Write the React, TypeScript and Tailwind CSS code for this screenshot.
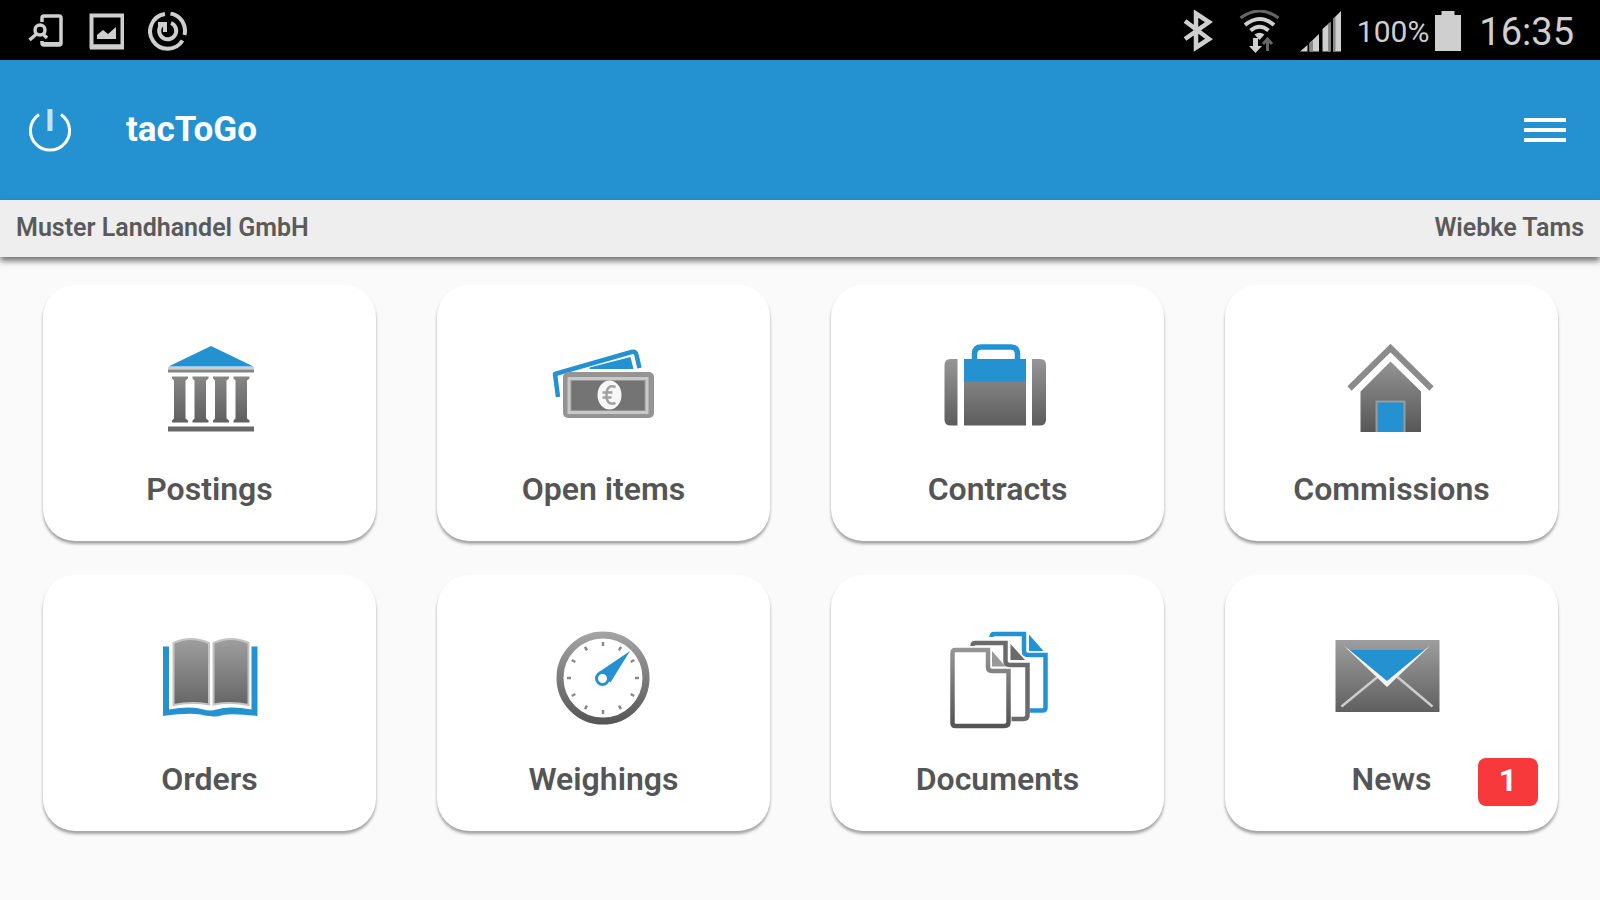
import React from 'react';

interface Tile {
  id: string;
  label: string;
  icon: React.ReactNode;
  badge?: number;
}

const BLUE = '#2492d1';
const GREY = 'url(#metal)';

// Shared gradient, in the coordinates of the 120x120 tile icons
const IconDefs = () => (
  <svg className="absolute h-0 w-0" aria-hidden="true">
    <defs>
      <linearGradient id="metal" gradientUnits="userSpaceOnUse" x1="0" y1="15" x2="0" y2="105">
        <stop offset="0" stopColor="#a3a3a3" />
        <stop offset="1" stopColor="#555555" />
      </linearGradient>
    </defs>
  </svg>
);

const TileIcon: React.FC<{ children: React.ReactNode }> = ({ children }) => (
  <svg className="h-[120px] w-[120px]" viewBox="0 0 120 120" fill="none" aria-hidden="true">
    {children}
  </svg>
);

const BankIcon = () => (
  <TileIcon>
    <path d="M61 17 103.500 37.500h-85z" fill={BLUE} />
    <path d="M18 38h86v2.500H18z" fill="#cfcfcf" />
    <path d="M18 40.500h86v3H18z" fill="#858585" />
    {[22, 42.5, 63, 83.5].map((x) => (
      <path
        key={x}
        d={`M${x} 47.500h16v2l-2.500 2v38l2.500 2v2h-16v-2l2-2V51.500l-2-2z`}
        fill={GREY}
      />
    ))}
    <path d="M18 97.500h86v5H18z" fill="#686868" />
  </TileIcon>
);

const MoneyIcon = () => (
  <TileIcon>
    <path d="M14 68 11 45 87.500 23q4-1 5 3L95.500 39" stroke={BLUE} strokeWidth="4.500" strokeLinejoin="round" />
    <path d="M45.500 38.500 86.500 28l3 12h-44z" fill={BLUE} />
    <rect x="19" y="43" width="91" height="46" rx="5" fill="#949494" />
    <rect x="25" y="49.500" width="78" height="34" stroke="#c9c9c9" strokeWidth="3" />
    <rect x="27.500" y="52" width="73" height="29" fill="#747474" />
    <ellipse cx="65.500" cy="66" rx="12" ry="14.500" fill="#f7f7f7" />
    <path d="M71.500 58q-9-3-9 8t9 8M58.500 63.500h10M58.500 68.500h9" stroke="#a0a0a0" strokeWidth="2.500" />
  </TileIcon>
);

const SuitcaseIcon = () => (
  <TileIcon>
    <path d="M36.500 31v-6q0-7 7-7h29q7 0 7 7v6" stroke={BLUE} strokeWidth="5.500" />
    <path d="M19.500 30v66.500h-7q-6 0-6-6V36q0-6 6-6z" fill={GREY} />
    <path d="M26 52h62v44.500H26z" fill={GREY} />
    <path d="M26 30h62v22.500H26z" fill={BLUE} />
    <path d="M94 30h8q6 0 6 6v54.500q0 6-6 6h-8z" fill={GREY} />
  </TileIcon>
);

const HouseIcon = () => (
  <TileIcon>
    <path d="M17.500 59.500 58.500 19l41 40.500" stroke="#8b8b8b" strokeWidth="6" />
    <path d="m58.500 32.500 30.500 30V103H28.500V62.500z" fill={GREY} />
    <path d="M43.500 71.500h30V103h-30z" fill="#9a9a9a" />
    <path d="M45.500 73.500h26V103h-26z" fill={BLUE} />
  </TileIcon>
);

const BookIcon = () => (
  <TileIcon>
    <path
      d="M13 27.500h6v63q22-4 34.500 0 6.500 2 13 0 13-4 35 0v-63h6V97q-24-3-35-1-6 2.500-12 1-4 0-10-1.500-12-2-37.500 1.500z"
      fill={BLUE}
    />
    <path d="M23.500 86V24q17-8 35.500 0v61.500q-18-3-35.500.500z" fill={GREY} stroke="#c4c4c4" strokeWidth="2" />
    <path d="M63.500 85.500V24q18-8 35 0v62q-17-3.500-35-.500z" fill={GREY} stroke="#c4c4c4" strokeWidth="2" />
  </TileIcon>
);

const GaugeIcon = () => (
  <TileIcon>
    <circle cx="59" cy="59" r="43" stroke={GREY} strokeWidth="7" />
    {Array.from({ length: 12 }, (_, i) => (
      <path
        key={i}
        d="M59 23v4"
        stroke="#888888"
        strokeWidth="2.500"
        transform={`rotate(${i * 30} 59 59)`}
      />
    ))}
    <path d="M86 32 66.500 63.500 55 53z" fill={BLUE} />
    <circle cx="58.500" cy="59.500" r="6" fill="#ffffff" stroke={BLUE} strokeWidth="3" />
  </TileIcon>
);

const DocumentsIcon = () => (
  <TileIcon>
    <path
      d="M53.500 18q0-3 3-3H86v17q0 4 4 4h17.500v52.500q0 3-3 3h-13"
      stroke={BLUE}
      strokeWidth="4.500"
    />
    <path d="M91 15.500 105.500 32H91z" fill={BLUE} />
    <path
      d="M34.500 27q0-3 3-3h30v18q0 4 4 4h18v50q0 4-4 4h-12"
      stroke="#6b6b6b"
      strokeWidth="4.500"
    />
    <path d="M72.500 25 87 41H72.500z" fill="#6b6b6b" />
    <path
      d="M17.500 31H50v17q0 4 4 4h16.500v51q0 4-4 4h-49q-3 0-3-3V34q0-3 3-3z"
      stroke={GREY}
      strokeWidth="4.500"
    />
    <path d="M54 32 67.500 47.500H54z" fill="#999999" />
  </TileIcon>
);

const EnvelopeIcon = () => (
  <TileIcon>
    <path d="M3.500 21h104v72h-104z" fill={GREY} />
    <path d="M9.500 87.500 45.500 58M100.500 87.500 65.500 58" stroke="#cccccc" strokeWidth="2.500" />
    <path d="M17.500 31h75L55 62z" fill={BLUE} />
    <path d="M11.500 26.500 17.500 31 55 62 92.500 31l6-4.500L55 68z" fill="#f2f2f2" />
  </TileIcon>
);

const tiles: Tile[] = [
  { id: 'postings', label: 'Postings', icon: <BankIcon /> },
  { id: 'open-items', label: 'Open items', icon: <MoneyIcon /> },
  { id: 'contracts', label: 'Contracts', icon: <SuitcaseIcon /> },
  { id: 'commissions', label: 'Commissions', icon: <HouseIcon /> },
  { id: 'orders', label: 'Orders', icon: <BookIcon /> },
  { id: 'weighings', label: 'Weighings', icon: <GaugeIcon /> },
  { id: 'documents', label: 'Documents', icon: <DocumentsIcon /> },
  { id: 'news', label: 'News', icon: <EnvelopeIcon />, badge: 1 },
];

const StatusBar = () => (
  <div className="flex h-[60px] items-center justify-between bg-black pt-1 pr-[26px] pl-7 text-[#cfcfcf]">
    <div className="flex items-center gap-6">
      {/* Phone search */}
      <svg className="h-10 w-9" viewBox="0 0 36 40" fill="none" stroke="currentColor" aria-hidden="true">
        <path d="M14 10V6q0-2 2-2h15q2 0 2 2v25q0 2-2 2H16q-2 0-2-2v-2" strokeWidth="3.500" />
        <path d="M15 32h17" strokeWidth="4" />
        <circle cx="12" cy="18" r="5" strokeWidth="3.500" />
        <path d="m8.500 22-7 6M15 22l4 4" strokeWidth="3.500" />
      </svg>
      {/* Screenshot */}
      <svg className="h-10 w-9" viewBox="0 0 36 40" fill="none" stroke="currentColor" aria-hidden="true">
        <path d="M3.500 3.500h31v31h-31z" strokeWidth="4" />
        <path d="M2 35h34" strokeWidth="5" />
        <path d="M9 27v-4l6-5 5 4 8-7v12z" fill="currentColor" stroke="none" />
      </svg>
      {/* Sync */}
      <svg className="h-10 w-10" viewBox="0 0 40 40" fill="none" stroke="currentColor" aria-hidden="true">
        <path d="M17 2A17.500 17.500 0 1 0 34.500 28.500M22.500 1.500A17.500 17.500 0 0 1 36.500 23" strokeWidth="4" />
        <path d="M14 12.500a8.500 8.500 0 1 0 9-1.500M17 20v-8h-7" strokeWidth="4" />
      </svg>
    </div>

    <div className="flex items-center">
      {/* Bluetooth */}
      <svg className="mr-6 h-11 w-8" viewBox="0 0 32 44" fill="none" stroke="currentColor" aria-hidden="true">
        <path d="m3 11 24 18-13 8.500V3.500L27 12 3 29" strokeWidth="4.500" />
      </svg>
      {/* Wi-Fi */}
      <svg className="mr-5 h-11 w-[42px]" viewBox="0 0 42 44" fill="none" stroke="currentColor" aria-hidden="true">
        <path d="M2.500 8q19-14 38 0" stroke="#666666" strokeWidth="3" />
        <path d="M7 15q15-12 29 0M12.500 20.500q9-7.500 18 0" strokeWidth="4" />
        <path d="M16.500 24.500q5-3.500 10 0l-5 5.500z" fill="currentColor" stroke="none" />
        <path d="M15 28h5v8h4l-6.500 7-6.500-7h4z" fill="currentColor" stroke="none" />
        <path d="M29.500 41V29M25 34l4.500-5 4.500 5" stroke="#666666" strokeWidth="3" />
      </svg>
      {/* Mobile signal */}
      <svg className="mr-4 h-11 w-[41px]" viewBox="0 0 41 44" fill="currentColor" aria-hidden="true">
        <path d="M0 41.500 7.500 35v6.500zM9.500 33 19 24v17.500H9.500z" />
        <path d="m22.500 19 8-7v29.500h-8zM33 9l8-8v40.500h-8z" />
        <path d="M9.500 33 13 30v11.500H9.500zM28 14l2.500-2v29.500H28zM33 9l2.500-2v34.500H33z" fill="#888888" />
      </svg>
      <span className="text-[30px] leading-none">100%</span>
      {/* Battery */}
      <svg className="mr-[10px] ml-[6px] h-[42px] w-[26px]" viewBox="0 0 26 42" fill="currentColor" aria-hidden="true">
        <path d="M0 4h6.500V0h13v4H26v36H0z" />
      </svg>
      <time className="ml-2 text-[38px] leading-none">16:35</time>
    </div>
  </div>
);

const AppHeader = () => (
  <header className="flex h-[140px] items-center bg-[#2492d1] pr-[34px] pl-7 text-white">
    <button type="button" aria-label="Log out" className="mr-[54px]">
      <svg className="h-11 w-11" viewBox="0 0 44 44" fill="none" stroke="currentColor" aria-hidden="true">
        <path d="M11 6.500a19.500 19.500 0 1 0 22 0" strokeWidth="3" />
        <path d="M22 1v22" stroke="#c5e2f4" strokeWidth="5" />
      </svg>
    </button>
    <h1 className="text-[35px] leading-10 font-bold">tacToGo</h1>
    <button type="button" aria-label="Menu" className="ml-auto">
      <svg className="h-7 w-[42px]" viewBox="0 0 42 28" stroke="currentColor" strokeWidth="4" aria-hidden="true">
        <path d="M0 4h42M0 14h42M0 24h42" />
      </svg>
    </button>
  </header>
);

const App: React.FC = () => {
  return (
    <div className="min-h-screen bg-[#fafafa] font-['Roboto',sans-serif]">
      <IconDefs />
      <StatusBar />
      <AppHeader />

      <div className="flex h-[57px] justify-between bg-[#eeeeee] px-4 pt-3 text-[25px] leading-8 font-semibold text-[#5a5a5a] shadow-[0_4px_6px_rgba(0,0,0,0.55)]">
        <span>Muster Landhandel GmbH</span>
        <span>Wiebke Tams</span>
      </div>

      <main className="grid grid-cols-4 gap-x-[61px] gap-y-[34px] py-7 pr-[42px] pl-[43px]">
        {tiles.map((tile) => (
          <button
            key={tile.id}
            type="button"
            className="relative flex h-64 flex-col items-center rounded-[32px] bg-white pt-11 shadow-[0_3px_3px_rgba(0,0,0,0.35)]"
          >
            {tile.icon}
            <span className="mt-5 text-[32px] leading-10 font-semibold text-[#555555]">{tile.label}</span>
            {tile.badge && (
              <span className="absolute right-5 bottom-[25px] flex h-12 w-[60px] justify-center rounded-lg bg-[#f7393b] text-[32px] leading-[44px] font-bold text-white">
                {tile.badge}
              </span>
            )}
          </button>
        ))}
      </main>
    </div>
  );
};

export default App;
